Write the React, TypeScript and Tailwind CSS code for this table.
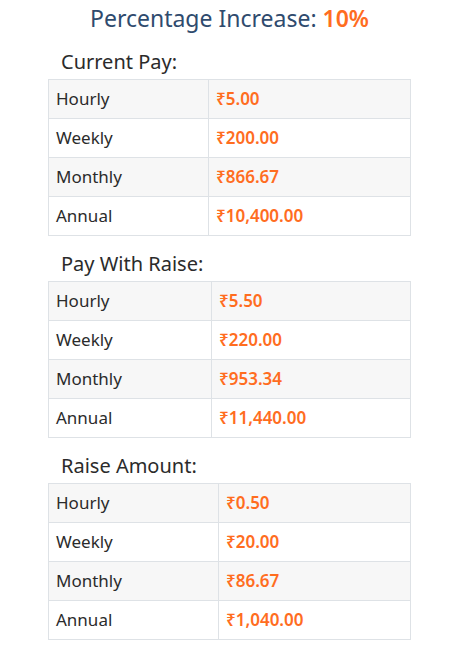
import React from "react";

type Row = { label: string; value: string };

const sections: { title: string; labelWidth: string; rows: Row[] }[] = [
  {
    title: "Current Pay:",
    labelWidth: "w-[160px]",
    rows: [
      { label: "Hourly", value: "₹5.00" },
      { label: "Weekly", value: "₹200.00" },
      { label: "Monthly", value: "₹866.67" },
      { label: "Annual", value: "₹10,400.00" },
    ],
  },
  {
    title: "Pay With Raise:",
    labelWidth: "w-[163px]",
    rows: [
      { label: "Hourly", value: "₹5.50" },
      { label: "Weekly", value: "₹220.00" },
      { label: "Monthly", value: "₹953.34" },
      { label: "Annual", value: "₹11,440.00" },
    ],
  },
  {
    title: "Raise Amount:",
    labelWidth: "w-[170px]",
    rows: [
      { label: "Hourly", value: "₹0.50" },
      { label: "Weekly", value: "₹20.00" },
      { label: "Monthly", value: "₹86.67" },
      { label: "Annual", value: "₹1,040.00" },
    ],
  },
];

export default function App() {
  return (
    <div className="min-h-screen bg-white font-['Noto_Sans',sans-serif] text-[#2b2b2b]">
      <div className="pl-[48px] w-[411px]">
        <h1 className="text-center text-[23px] leading-[32px] text-[#2f4b6e] pt-[2px]">
          Percentage Increase: <span className="font-semibold text-[#ff6d1f]">10%</span>
        </h1>
        {sections.map((s, i) => (
          <div key={s.title} className={i === 0 ? "mt-[14px]" : "mt-[14px]"}>
            <h2 className="pl-[13px] text-[20px] leading-[28px] mb-[3px]">{s.title}</h2>
            <table className="w-full border-collapse border border-[#dee2e6] text-[17px]">
              <tbody>
                {s.rows.map((r, j) => (
                  <tr key={r.label} className={j % 2 === 0 ? "bg-[#f7f7f7]" : "bg-white"}>
                    <td className={`${s.labelWidth} h-[39px] border border-[#dee2e6] px-[7px]`}>{r.label}</td>
                    <td className="h-[39px] border border-[#dee2e6] px-[7px] font-semibold text-[#ff6d1f]">
                      {r.value}
                    </td>
                  </tr>
                ))}
              </tbody>
            </table>
          </div>
        ))}
      </div>
    </div>
  );
}
